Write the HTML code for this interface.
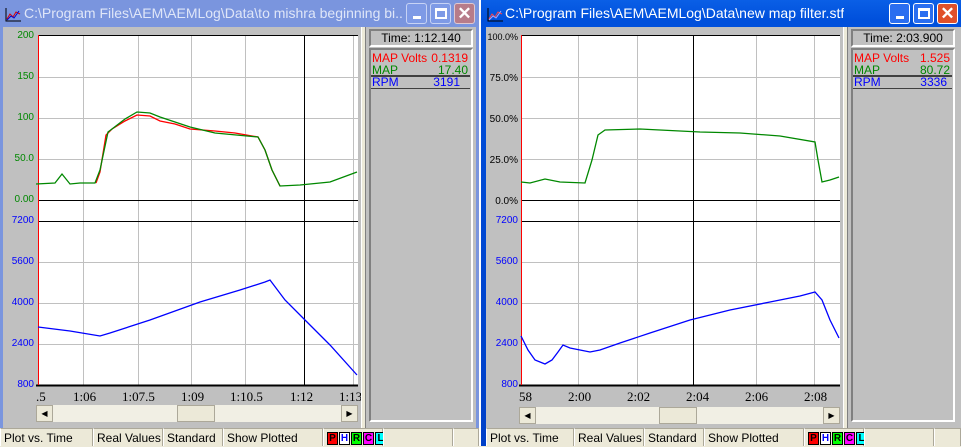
<!DOCTYPE html>
<html><head><meta charset="utf-8"><style>
*{margin:0;padding:0;box-sizing:border-box}
body{width:961px;height:446px;overflow:hidden;background:#ece9d8;font-family:"Liberation Sans",sans-serif;position:relative}
.a{position:absolute}
.tb{font-size:14px;color:#fff;white-space:nowrap;overflow:hidden}
.btn{position:absolute;top:3px;width:21px;height:21px;border:1px solid #fff;border-radius:3px}
.sb{position:absolute;top:428px;height:18px;font-size:12px;line-height:18px;padding-left:3px;border-left:1px solid #fff;border-top:1px solid #aca899;color:#000;white-space:nowrap;background:#ece9d8;box-shadow:inset -1px 0 #aca899}
.lbl{font-family:"Liberation Serif",serif;font-size:13px;position:absolute;top:389px}
.ax{font-size:10px;position:absolute;text-align:right}
.pn{position:absolute;background:#c0c0c0;border:2px solid;border-color:#808080 #fff #fff #808080}
.row{position:absolute;font-size:12px;left:3px;right:3px;height:12px;line-height:12px}
.row span{position:absolute;right:2px}
.pb{display:inline-block;width:11px;height:13px;border:1px solid #000;font-size:10px;font-weight:bold;line-height:11px;text-align:center;margin-right:1px}
</style></head><body>

<!-- LEFT WINDOW -->
<div class="a" style="left:0;top:0;width:479px;height:428px;background:#7a95de"></div>
<div class="a" style="left:3px;top:27px;width:473px;height:401px;background:#c0c0c0"></div>
<div class="a tb" style="left:24px;top:5px;width:378px;color:#dfe6f8">C:\Program Files\AEM\AEMLog\Data\to mishra beginning bi...</div>
<svg class="a" style="left:5px;top:8px" width="16" height="14"><path d="M1 0V13H16" stroke="#000" fill="none"/><path d="M2 11L5 6 8 9 11 4 15 6" stroke="#d00" fill="none"/><path d="M2 12L6 8 9 10 14 3" stroke="#00c" fill="none"/></svg>
<div class="btn" style="left:406px;background:#7e9ae6;border-color:#c7d3f5"><div class="a" style="left:6px;top:12px;width:8px;height:3px;background:#fff"></div></div>
<div class="btn" style="left:430px;background:#7e9ae6;border-color:#c7d3f5"><div class="a" style="left:4px;top:4px;width:12px;height:11px;border:2px solid #fff;border-top-width:3px"></div></div>
<div class="btn" style="left:454px;background:#b77c8a;border-color:#e0c8d0;color:#fff;font-size:17px;font-weight:bold;text-align:center;line-height:19px">✕</div>

<svg class="a" style="left:0;top:27px" width="479" height="401">
<rect x="38" y="8" width="320" height="350" fill="#fff"/>
<g stroke="#c0c0c0" stroke-width="1">
<line x1="83.5" y1="8" x2="83.5" y2="358"/><line x1="138.5" y1="8" x2="138.5" y2="358"/><line x1="191.5" y1="8" x2="191.5" y2="358"/><line x1="245.5" y1="8" x2="245.5" y2="358"/><line x1="353.5" y1="8" x2="353.5" y2="358"/>
<line x1="38" y1="50.5" x2="358" y2="50.5"/><line x1="38" y1="91.5" x2="358" y2="91.5"/><line x1="38" y1="132.5" x2="358" y2="132.5"/>
<line x1="38" y1="235.5" x2="358" y2="235.5"/><line x1="38" y1="276.5" x2="358" y2="276.5"/><line x1="38" y1="317.5" x2="358" y2="317.5"/>
</g>
<line x1="38" y1="8.5" x2="358" y2="8.5" stroke="#000"/>
<line x1="38" y1="173.5" x2="358" y2="173.5" stroke="#000"/>
<line x1="38" y1="194.5" x2="358" y2="194.5" stroke="#000"/>
<line x1="36" y1="358.5" x2="358" y2="358.5" stroke="#000" stroke-width="2"/>
<line x1="304.5" y1="8" x2="304.5" y2="358" stroke="#000"/>
<line x1="38.5" y1="8" x2="38.5" y2="358" stroke="#f00"/>
<g transform="translate(0,-27)" fill="none" stroke-width="1.3">
<polyline stroke="#f00" points="96,183 100,172 106,135 112,129 125,121 137,115 150,116 160,121 175,124 190,129 215,131 235,133 258,137 265,150 272,170 280,186"/>
<polyline stroke="#080" points="36,184 55,183 62,174 70,184 80,183 95,183 100,170 108,132 112,129 125,119 137,112 150,113 160,117 190,127 215,133 258,137 265,150 272,170 280,186 300,185 330,182 357,172"/>
<polyline stroke="#00f" points="38,327 70,331 100,336 110,333 150,320 200,302 240,290 265,282 270,280 285,300 305,320 330,345 357,375"/>
</g>
</svg>
<div class="ax" style="left:0;width:34px;top:30px;color:#080">200</div>
<div class="ax" style="left:0;width:34px;top:71px;color:#080">150</div>
<div class="ax" style="left:0;width:34px;top:112px;color:#080">100</div>
<div class="ax" style="left:0;width:34px;top:153px;color:#080">50.0</div>
<div class="ax" style="left:0;width:34px;top:194px;color:#080">0.00</div>
<div class="ax" style="left:0;width:34px;top:215px;color:#00f">7200</div>
<div class="ax" style="left:0;width:34px;top:256px;color:#00f">5600</div>
<div class="ax" style="left:0;width:34px;top:297px;color:#00f">4000</div>
<div class="ax" style="left:0;width:34px;top:338px;color:#00f">2400</div>
<div class="ax" style="left:0;width:34px;top:379px;color:#00f">800</div>
<div class="lbl" style="left:36px">.5</div>
<div class="lbl" style="left:73px">1:06</div>
<div class="lbl" style="left:122px">1:07.5</div>
<div class="lbl" style="left:181px">1:09</div>
<div class="lbl" style="left:230px">1:10.5</div>
<div class="lbl" style="left:290px">1:12</div>
<div class="lbl" style="left:339px">1:13</div>
<div class="a" style="left:36px;top:405px;width:322px;height:17px;background:#f1efe4"></div>
<div class="a" style="left:36px;top:405px;width:17px;height:17px;background:#ece9d8;border:1px solid #aca899;font-size:8px;text-align:center;line-height:15px">◀</div>
<div class="a" style="left:341px;top:405px;width:17px;height:17px;background:#ece9d8;border:1px solid #aca899;font-size:8px;text-align:center;line-height:15px">▶</div>
<div class="a" style="left:177px;top:405px;width:38px;height:17px;background:#ece9d8;border:1px solid #aca899"></div>
<div class="a" style="left:361px;top:27px;width:5px;height:401px;background:#ece9d8;border-left:1px solid #fff;border-right:1px solid #808080"></div>
<div class="pn" style="left:369px;top:29px;width:104px;height:18px;font-size:12px;text-align:center;line-height:14px">Time: 1:12.140</div>
<div class="pn" style="left:369px;top:48px;width:104px;height:374px"></div>
<div class="row" style="left:372px;width:98px;top:52px;color:#f00">MAP Volts<span>0.1319</span></div>
<div class="row" style="left:372px;width:98px;top:64px;color:#080">MAP<span>17.40</span></div>
<div class="a" style="left:371px;top:75px;width:99px;height:2px;background:#404040"></div>
<div class="row" style="left:372px;width:98px;top:76px;color:#00f">RPM<span style="right:10px">3191</span></div>
<div class="a" style="left:371px;top:88px;width:99px;height:1px;background:#404040"></div>

<div class="sb" style="left:0;width:93px">Plot vs. Time</div>
<div class="sb" style="left:93px;width:70px">Real Values</div>
<div class="sb" style="left:163px;width:60px">Standard</div>
<div class="sb" style="left:223px;width:100px">Show Plotted</div>
<div class="sb" style="left:323px;width:60px;padding-top:2px;line-height:13px"><span class="pb" style="background:#f00">P</span><span class="pb" style="background:#fff;color:#00f">H</span><span class="pb" style="background:#0f0">R</span><span class="pb" style="background:#f0f">C</span><span class="pb" style="background:#0ff">L</span></div>
<div class="sb" style="left:383px;width:70px"></div>
<div class="sb" style="left:453px;width:26px"></div>

<div class="a" style="left:479px;top:0;width:2px;height:446px;background:#fff"></div>

<!-- RIGHT WINDOW -->
<div class="a" style="left:481px;top:0;width:480px;height:446px;background:linear-gradient(#0a5fe6,#0050dc 20px,#0040c8)"></div>
<div class="a" style="left:486px;top:27px;width:475px;height:401px;background:#c0c0c0"></div>
<div class="a tb" style="left:505px;top:5px">C:\Program Files\AEM\AEMLog\Data\new map filter.stf</div>
<svg class="a" style="left:487px;top:8px" width="16" height="14"><path d="M1 0V13H16" stroke="#000" fill="none"/><path d="M2 11L5 6 8 9 11 4 15 6" stroke="#f44" fill="none"/><path d="M2 12L6 8 9 10 14 3" stroke="#aaf" fill="none"/></svg>
<div class="btn" style="left:889px;background:#2a6ef0"><div class="a" style="left:6px;top:12px;width:8px;height:3px;background:#fff"></div></div>
<div class="btn" style="left:913px;background:#2a6ef0"><div class="a" style="left:4px;top:4px;width:12px;height:11px;border:2px solid #fff;border-top-width:3px"></div></div>
<div class="btn" style="left:937px;background:#e0502a;color:#fff;font-size:17px;font-weight:bold;text-align:center;line-height:19px">✕</div>

<svg class="a" style="left:481px;top:27px" width="480" height="401">
<rect x="40" y="8" width="319" height="350" fill="#fff"/>
<g stroke="#c0c0c0">
<line x1="97.5" y1="8" x2="97.5" y2="358"/><line x1="156.5" y1="8" x2="156.5" y2="358"/><line x1="275.5" y1="8" x2="275.5" y2="358"/><line x1="333.5" y1="8" x2="333.5" y2="358"/>
<line x1="40" y1="50.5" x2="359" y2="50.5"/><line x1="40" y1="91.5" x2="359" y2="91.5"/><line x1="40" y1="132.5" x2="359" y2="132.5"/>
<line x1="40" y1="235.5" x2="359" y2="235.5"/><line x1="40" y1="276.5" x2="359" y2="276.5"/><line x1="40" y1="317.5" x2="359" y2="317.5"/>
</g>
<line x1="40" y1="8.5" x2="359" y2="8.5" stroke="#000"/>
<line x1="40" y1="173.5" x2="359" y2="173.5" stroke="#000"/>
<line x1="40" y1="194.5" x2="359" y2="194.5" stroke="#000"/>
<line x1="38" y1="358.5" x2="359" y2="358.5" stroke="#000" stroke-width="2"/>
<line x1="212.5" y1="8" x2="212.5" y2="358" stroke="#000"/>
<line x1="40.5" y1="8" x2="40.5" y2="358" stroke="#f00"/>
<g transform="translate(-481,-27)" fill="none" stroke-width="1.3">
<polyline stroke="#080" points="521,182 530,183 545,179 560,182 585,183 592,160 598,135 605,130 640,129 700,132 740,133 780,136 815,142 818,160 822,182 830,180 839,177"/>
<polyline stroke="#00f" points="521,336 528,350 535,360 545,364 552,360 558,352 563,345 570,348 580,350 590,352 600,350 620,343 650,333 690,320 730,310 770,302 800,296 815,292 822,300 830,320 839,338"/>
</g>
</svg>
<div class="ax" style="left:481px;width:37px;top:32px;color:#000;font-size:9px">100.0%</div>
<div class="ax" style="left:481px;width:37px;top:73px;color:#000">75.0%</div>
<div class="ax" style="left:481px;width:37px;top:114px;color:#000">50.0%</div>
<div class="ax" style="left:481px;width:37px;top:155px;color:#000">25.0%</div>
<div class="ax" style="left:481px;width:37px;top:196px;color:#000">0.0%</div>
<div class="ax" style="left:481px;width:37px;top:215px;color:#00f">7200</div>
<div class="ax" style="left:481px;width:37px;top:256px;color:#00f">5600</div>
<div class="ax" style="left:481px;width:37px;top:297px;color:#00f">4000</div>
<div class="ax" style="left:481px;width:37px;top:338px;color:#00f">2400</div>
<div class="ax" style="left:481px;width:37px;top:379px;color:#00f">800</div>
<div class="lbl" style="left:519px">58</div>
<div class="lbl" style="left:568px">2:00</div>
<div class="lbl" style="left:627px">2:02</div>
<div class="lbl" style="left:686px">2:04</div>
<div class="lbl" style="left:745px">2:06</div>
<div class="lbl" style="left:804px">2:08</div>
<div class="a" style="left:519px;top:407px;width:321px;height:17px;background:#f1efe4"></div>
<div class="a" style="left:519px;top:407px;width:17px;height:17px;background:#ece9d8;border:1px solid #aca899;font-size:8px;text-align:center;line-height:15px">◀</div>
<div class="a" style="left:823px;top:407px;width:17px;height:17px;background:#ece9d8;border:1px solid #aca899;font-size:8px;text-align:center;line-height:15px">▶</div>
<div class="a" style="left:659px;top:407px;width:38px;height:17px;background:#ece9d8;border:1px solid #aca899"></div>
<div class="a" style="left:843px;top:27px;width:5px;height:401px;background:#ece9d8;border-left:1px solid #fff;border-right:1px solid #808080"></div>
<div class="pn" style="left:851px;top:29px;width:104px;height:18px;font-size:12px;text-align:center;line-height:14px">Time: 2:03.900</div>
<div class="pn" style="left:851px;top:48px;width:104px;height:374px"></div>
<div class="row" style="left:854px;width:98px;top:52px;color:#f00">MAP Volts<span>1.525</span></div>
<div class="row" style="left:854px;width:98px;top:64px;color:#080">MAP<span>80.72</span></div>
<div class="a" style="left:853px;top:75px;width:99px;height:2px;background:#404040"></div>
<div class="row" style="left:854px;width:98px;top:76px;color:#00f">RPM<span style="right:5px">3336</span></div>
<div class="a" style="left:853px;top:88px;width:99px;height:1px;background:#404040"></div>

<div class="sb" style="left:486px;width:88px">Plot vs. Time</div>
<div class="sb" style="left:574px;width:70px">Real Values</div>
<div class="sb" style="left:644px;width:60px">Standard</div>
<div class="sb" style="left:704px;width:100px">Show Plotted</div>
<div class="sb" style="left:804px;width:60px;padding-top:2px;line-height:13px"><span class="pb" style="background:#f00">P</span><span class="pb" style="background:#fff;color:#00f">H</span><span class="pb" style="background:#0f0">R</span><span class="pb" style="background:#f0f">C</span><span class="pb" style="background:#0ff">L</span></div>
<div class="sb" style="left:864px;width:70px"></div>
<div class="sb" style="left:934px;width:27px"></div>
</body></html>
